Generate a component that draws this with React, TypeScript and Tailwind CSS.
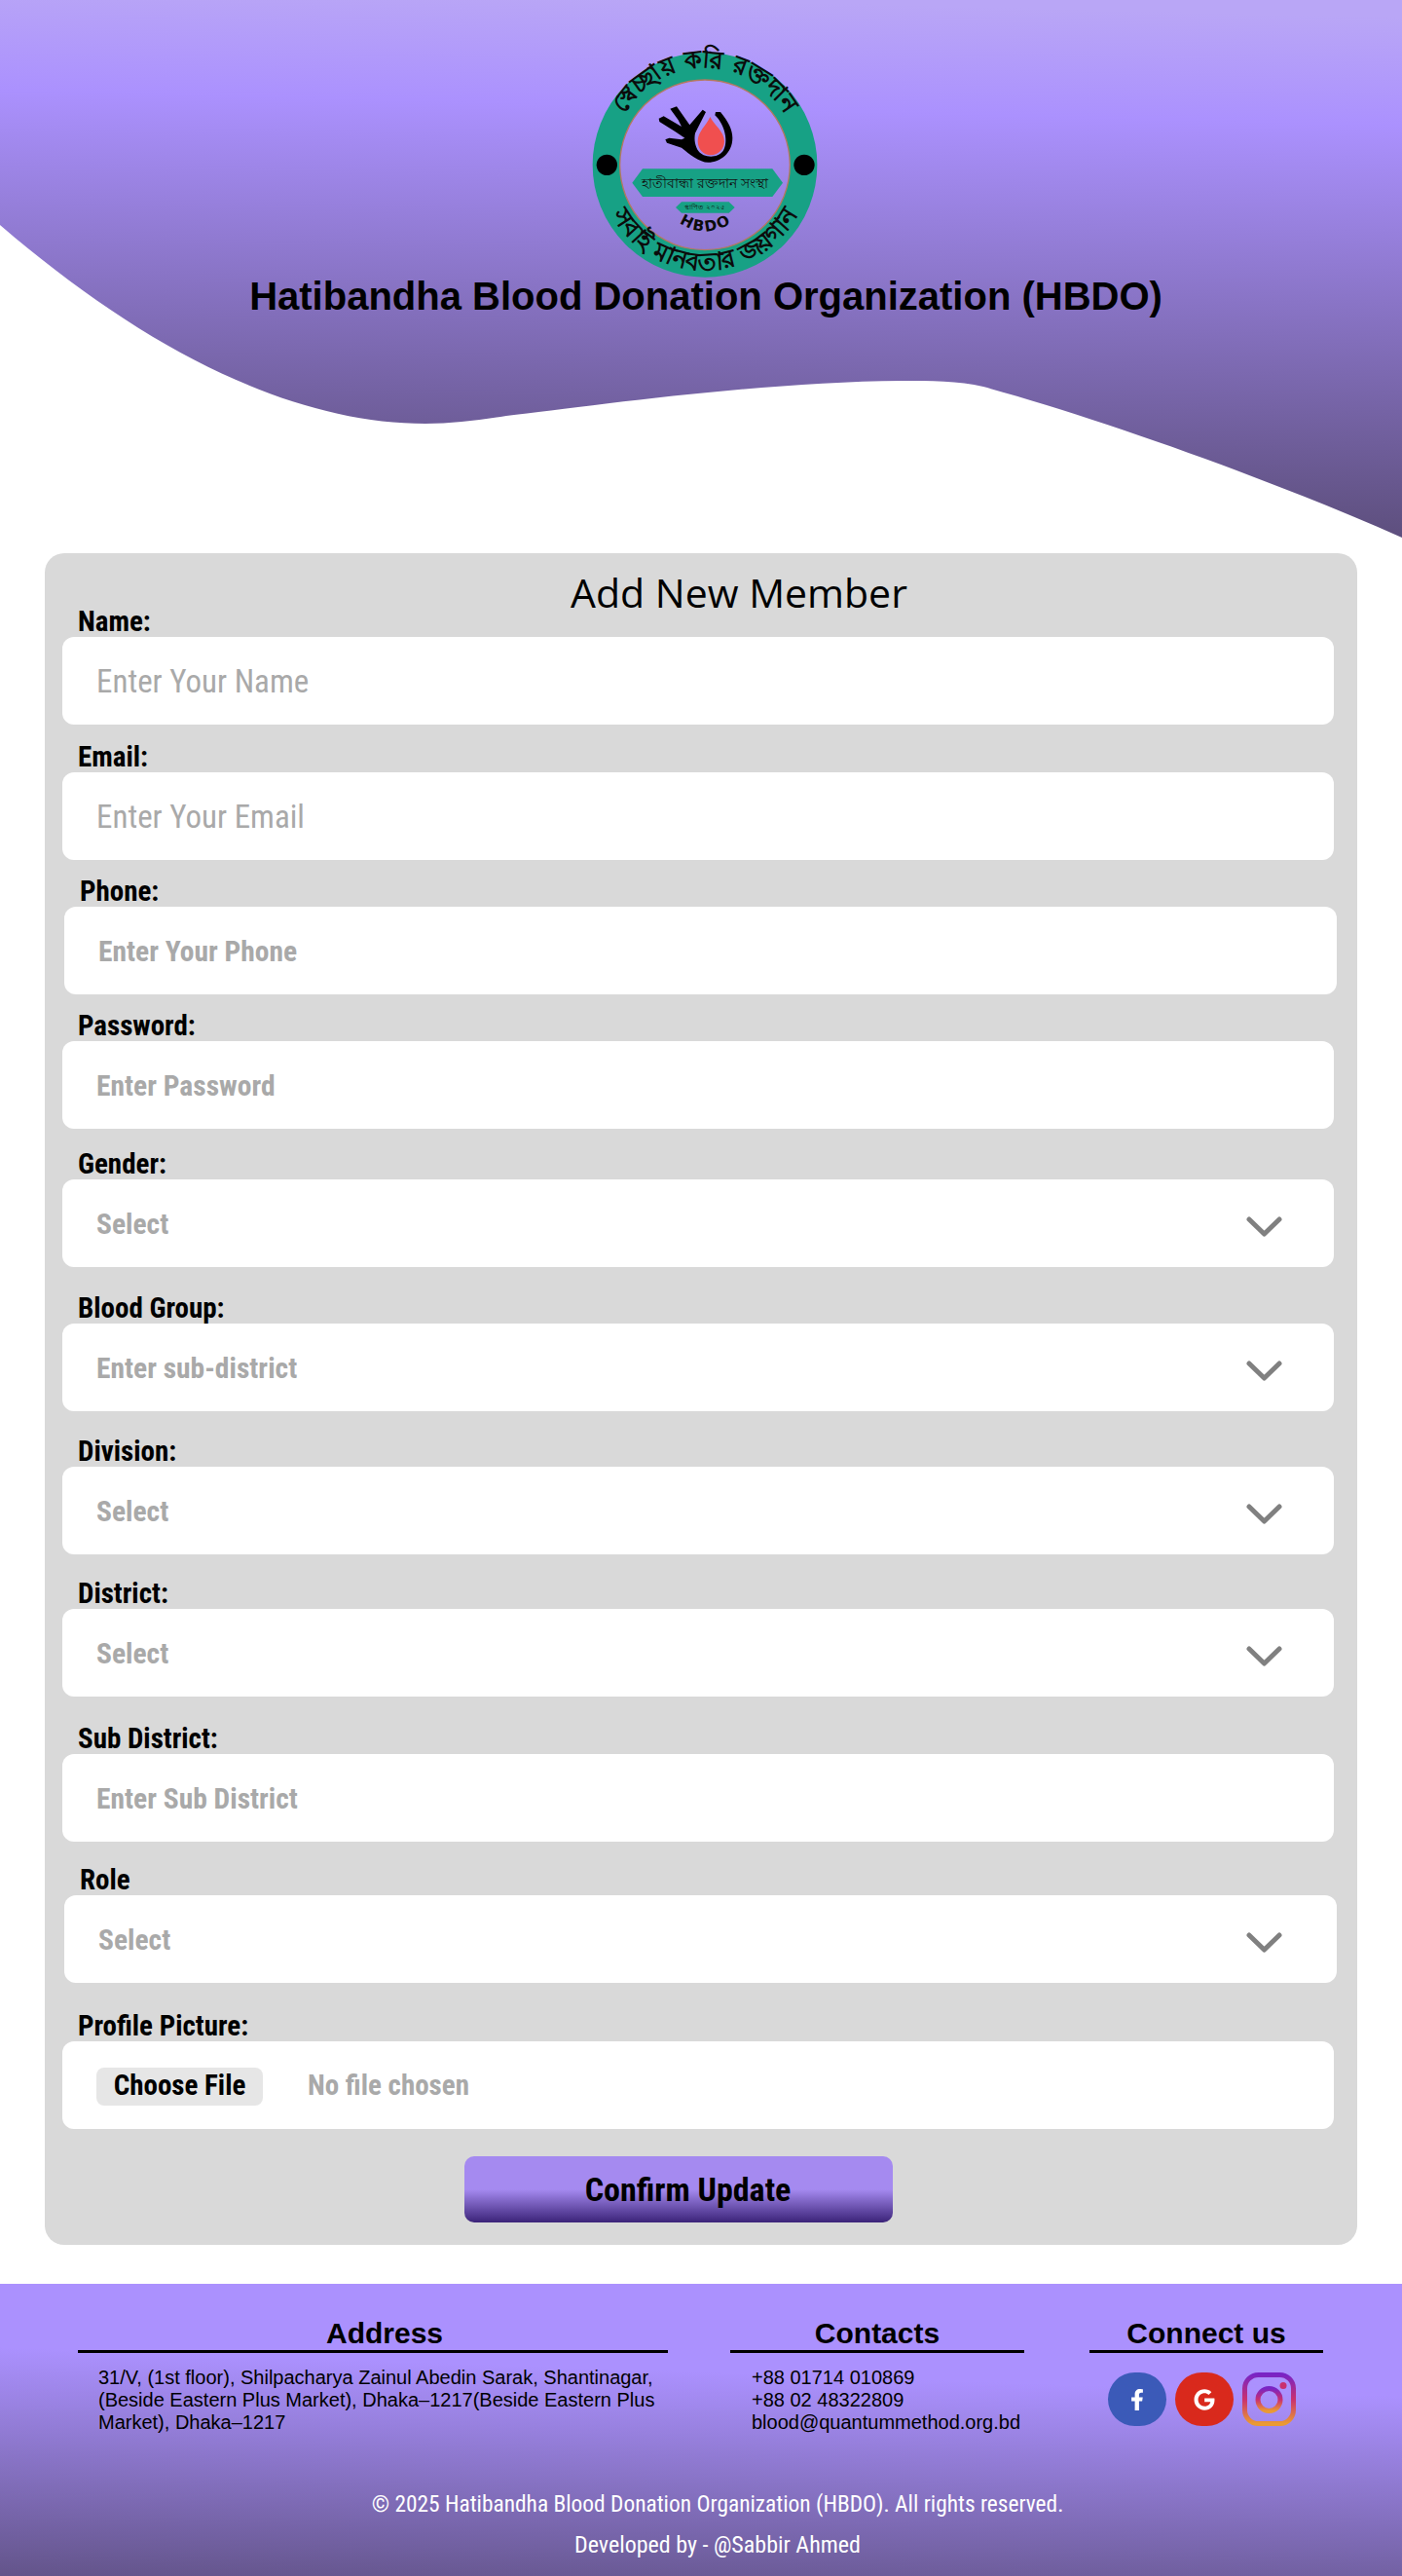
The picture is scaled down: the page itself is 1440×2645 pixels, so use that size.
import React from 'react';
import { FaFacebookF, FaGoogle } from 'react-icons/fa';

const narrow = "font-['Roboto_Condensed','Liberation_Sans',sans-serif]";

function Logo() {
  return (
    <svg width="300" height="270" viewBox="0 0 900 810" className="ml-[20px] block">
      <defs>
        <path id="arcTop" d="M185,262 A285,285 0 0 1 679,262" />
        <path id="arcBottom" d="M142,565 A325,325 0 0 0 722,565" />
        <path id="arcHbdo" d="M345,590 Q432,655 525,590" />
      </defs>
      <circle cx="432" cy="418" r="304" fill="none" stroke="#17a185" strokeWidth="84" />
      <circle cx="432" cy="418" r="262" fill="none" stroke="#b3785f" strokeWidth="4" />
      <circle cx="130" cy="418" r="32" fill="#000" />
      <circle cx="738" cy="418" r="32" fill="#000" />
      <text fontFamily="'DejaVu Sans',sans-serif" fontSize="76" fontWeight="700" fill="#0b0b0b">
        <textPath href="#arcTop" startOffset="50%" textAnchor="middle">স্বেচ্ছায় করি রক্তদান</textPath>
      </text>
      <text fontFamily="'DejaVu Sans',sans-serif" fontSize="76" fontWeight="700" fill="#0b0b0b">
        <textPath href="#arcBottom" startOffset="50%" textAnchor="middle">সবাই মানবতার জয়গান</textPath>
      </text>
      <g transform="translate(180,210)">
        <path d="M268,60 C280,85 312,105 312,135 C312,160 292,178 270,178 C248,178 230,160 230,135 C230,105 258,85 268,60Z" fill="#f04f4f" />
        <path
          d="M145,35 L165,28 L205,85 L245,38 L255,45 L222,110 C218,130 222,150 232,165 C245,185 290,190 308,165 C325,140 315,85 283,55 L285,45 L300,45 C325,75 337,100 337,125 C337,170 300,200 262,200 C235,200 205,175 180,155 L135,140 L130,130 L142,125 L180,130 L190,125 L160,105 L112,75 L110,65 L125,58 L180,90 L170,70 Z"
          fill="#000"
        />
      </g>
      <polygon points="240,430 640,430 672,473 640,516 240,516 208,473" fill="#17a185" />
      <text x="432" y="488" textAnchor="middle" fontFamily="'DejaVu Sans',sans-serif" fontSize="42" fill="#111">হাতীবান্ধা রক্তদান সংস্থা</text>
      <polygon points="360,532 506,532 524,549 506,566 360,566 342,549" fill="#17a185" />
      <text x="432" y="556" textAnchor="middle" fontFamily="'DejaVu Sans',sans-serif" fontSize="22" fill="#111">স্থাপিত ২০২৫</text>
      <text fontFamily="'DejaVu Sans',sans-serif" fontSize="46" fontWeight="700" fill="#0b0b0b" letterSpacing="6">
        <textPath href="#arcHbdo" startOffset="50%" textAnchor="middle">HBDO</textPath>
      </text>
    </svg>
  );
}

function Header() {
  return (
    <header className="relative h-[552px]">
      <svg className="absolute left-0 top-0" width="1440" height="553" viewBox="0 0 1440 553">
        <defs>
          <linearGradient id="headGrad" gradientUnits="userSpaceOnUse" x1="727" y1="0" x2="713" y2="552">
            <stop offset="0" stopColor="#b9a6f6" />
            <stop offset="0.2" stopColor="#ab91fe" />
            <stop offset="1" stopColor="#5a4c78" />
          </linearGradient>
        </defs>
        <path
          d="M0,231 C150,360 300,435 437,435 C465,435 495,431 520,427 C600,418 780,392 926,391 C955,391 985,391 1010,397 C1130,430 1300,490 1440,552 L1440,0 L0,0 Z"
          fill="url(#headGrad)"
        />
      </svg>
      <div className="relative flex flex-col items-center pt-[30px]">
        <Logo />
        <h1 className="mt-[-19px] ml-[10px] font-['Liberation_Sans',sans-serif] text-[40px] leading-[46px] font-bold text-black">
          Hatibandha Blood Donation Organization (HBDO)
        </h1>
      </div>
    </header>
  );
}

function Chevron({ className = 'right-[53px]' }: { className?: string }) {
  return (
    <svg width="37" height="21" viewBox="0 0 37 21" className={`absolute top-[38px] ${className}`}>
      <polyline points="3,3 18.5,18 34,3" fill="none" stroke="#808080" strokeWidth="5" strokeLinecap="round" strokeLinejoin="round" />
    </svg>
  );
}

const boxClass = 'relative h-[90px] w-full rounded-[12px] bg-white flex items-center pl-[35px] pt-[2px]';
const labelClass = `block h-8 pl-4 ${narrow} text-[29px] leading-8 font-bold text-black`;

function TextField({ label, placeholder, big, className }: { label: string; placeholder: string; big?: boolean; className: string }) {
  return (
    <div className={className}>
      <label className={labelClass}>{label}</label>
      <div className={boxClass}>
        <input
          placeholder={placeholder}
          className={`w-full bg-transparent outline-none ${narrow} placeholder:text-[#a9a9a9] ${big ? 'text-[33px]' : 'text-[29.5px] font-bold'}`}
        />
      </div>
    </div>
  );
}

function SelectField({ label, placeholder, className, chevron }: { label: string; placeholder: string; className: string; chevron?: string }) {
  return (
    <div className={className}>
      <label className={labelClass}>{label}</label>
      <div className={boxClass}>
        <span className={`${narrow} text-[29.5px] font-bold text-[#a9a9a9]`}>{placeholder}</span>
        <Chevron className={chevron} />
      </div>
    </div>
  );
}

function MemberForm() {
  return (
    <section className="mx-[46px] mt-4 rounded-[20px] bg-[#d9d9d9] pt-4 pb-[23px] pl-[18px] pr-[24px]">
      <h2 className="-mb-[10px] h-12 pl-[84px] text-center font-['Open_Sans',sans-serif] text-[41px] leading-[48px] text-black">Add New Member</h2>
      <TextField label="Name:" placeholder="Enter Your Name" big className="" />
      <TextField label="Email:" placeholder="Enter Your Email" big className="mt-[17px]" />
      <TextField label="Phone:" placeholder="Enter Your Phone" className="mt-4 ml-[2px] -mr-[3px]" />
      <TextField label="Password:" placeholder="Enter Password" className="mt-4" />
      <SelectField label="Gender:" placeholder="Select" className="mt-5" />
      <SelectField label="Blood Group:" placeholder="Enter sub-district" className="mt-[26px]" />
      <SelectField label="Division:" placeholder="Select" className="mt-[25px]" />
      <SelectField label="District:" placeholder="Select" className="mt-6" />
      <TextField label="Sub District:" placeholder="Enter Sub District" className="mt-[27px]" />
      <SelectField label="Role" placeholder="Select" className="mt-[23px] ml-[2px] -mr-[3px]" chevron="right-[56px]" />
      <div className="mt-7">
        <label className={labelClass}>Profile Picture:</label>
        <div className={boxClass}>
          <span className={`flex h-[39px] w-[171px] items-center justify-center rounded-[8px] bg-[#e6e6e6] ${narrow} text-[29px] font-bold text-black`}>Choose File</span>
          <span className={`ml-[46px] ${narrow} text-[29px] font-bold text-[#a9a9a9]`}>No file chosen</span>
        </div>
      </div>
      <div className="mt-7 flex justify-center pr-[41px]">
        <button className={`h-[68px] w-[440px] rounded-[10px] bg-[linear-gradient(180deg,#a58af0_50%,#3b2378_100%)] pl-5 ${narrow} text-[34px] font-bold text-black`}>
          Confirm Update
        </button>
      </div>
    </section>
  );
}

function Instagram() {
  return (
    <svg width="55" height="55" viewBox="0 0 55 55">
      <defs>
        <linearGradient id="igGrad" x1="0" y1="0" x2="0" y2="1">
          <stop offset="0" stopColor="#7a24c4" />
          <stop offset="0.5" stopColor="#c9306f" />
          <stop offset="1" stopColor="#ea9a33" />
        </linearGradient>
      </defs>
      <rect x="2.5" y="2.5" width="50" height="50" rx="14" fill="none" stroke="url(#igGrad)" strokeWidth="5" />
      <circle cx="27.5" cy="28" r="11.5" fill="none" stroke="url(#igGrad)" strokeWidth="5" />
      <circle cx="42" cy="13.5" r="3.5" fill="#c9306f" />
    </svg>
  );
}

function Footer() {
  const heading = "border-b-[3px] border-black text-center font-['Liberation_Sans',sans-serif] text-[30px] leading-[34px] font-bold text-black";
  const body = "mt-[14px] font-['Liberation_Sans',sans-serif] text-[20px] leading-[23px] text-black";
  return (
    <footer className="mt-10 h-[300px] bg-[linear-gradient(182deg,#ab91fe_33%,#63548a_100%)] pt-[34px]">
      <div className="flex items-start pl-[80px]">
        <div className="w-[606px]">
          <h3 className={`${heading} pl-6`}>Address</h3>
          <p className={`${body} pl-[21px] pr-[10px]`}>
            31/V, (1st floor), Shilpacharya Zainul Abedin Sarak, Shantinagar, (Beside Eastern Plus Market), Dhaka–1217(Beside Eastern Plus Market), Dhaka–1217
          </p>
        </div>
        <div className="ml-[64px] w-[302px]">
          <h3 className={heading}>Contacts</h3>
          <p className={`${body} pl-[22px]`}>
            +88 01714 010869<br />+88 02 48322809<br />blood@quantummethod.org.bd
          </p>
        </div>
        <div className="ml-[67px] w-[240px]">
          <h3 className={heading}>Connect us</h3>
          <div className="mt-[20px] flex items-center gap-[9px] pl-[19px]">
            <span className="flex h-[55px] w-[60px] items-center justify-center rounded-full bg-[#3b5ab8] text-[22px] text-white"><FaFacebookF /></span>
            <span className="flex h-[55px] w-[60px] items-center justify-center rounded-full bg-[#d9291c] text-[22px] text-white"><FaGoogle /></span>
            <Instagram />
          </div>
        </div>
      </div>
      <div className={`mt-[51px] pl-[34px] text-center ${narrow} leading-[42px] text-white`}>
        <p className="text-[23.4px]">© 2025 Hatibandha Blood Donation Organization (HBDO). All rights reserved.</p>
        <p className="text-[24px]">Developed by - @Sabbir Ahmed</p>
      </div>
    </footer>
  );
}

export default function App() {
  return (
    <div className="min-h-[2645px] w-[1440px] overflow-hidden bg-white">
      <Header />
      <MemberForm />
      <Footer />
    </div>
  );
}
